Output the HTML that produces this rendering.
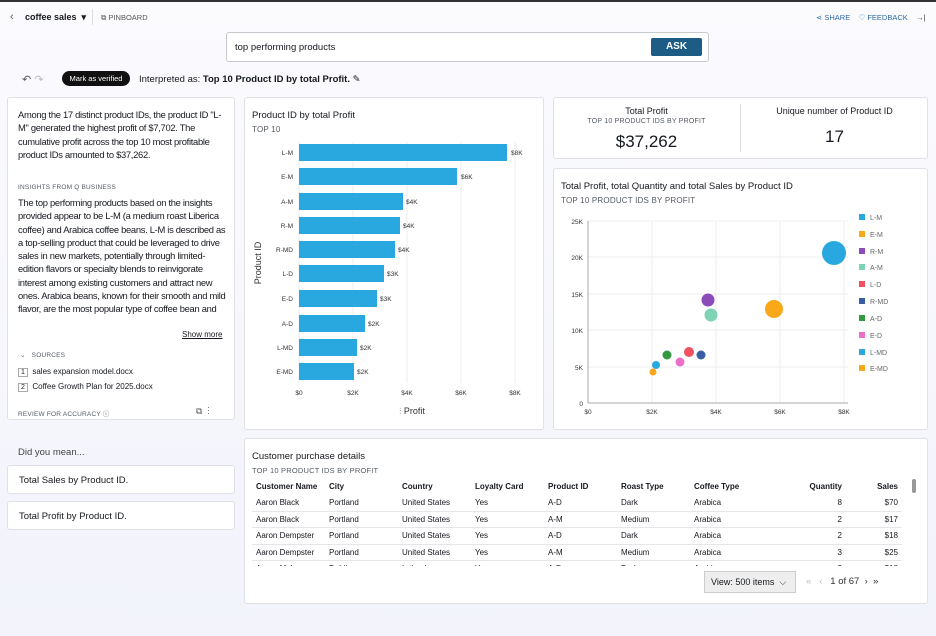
<!DOCTYPE html>
<html><head><meta charset="utf-8"><style>
*{box-sizing:border-box;margin:0;padding:0}
body{width:936px;height:636px;overflow:hidden;font-family:"Liberation Sans",sans-serif;background:linear-gradient(180deg,#fbfbfe,#f2f3fb);position:relative;color:#16191f}
.a{position:absolute}
.p{position:absolute;background:#fff;border:1px solid #dfe1e6;border-radius:3px}
.s{font-size:8px;color:#545b64;letter-spacing:.2px}
table{border-collapse:collapse;font-size:8px;width:650px}
td,th{text-align:left;padding:0 4px;height:16.5px;border-bottom:1px solid #e4e6ea;white-space:nowrap}
th{font-weight:bold;border:none}
.r{text-align:right}
</style></head><body>
<div class="a" style="left:0;top:0;width:936px;height:2px;background:#333"></div>
<div class="a" style="left:10px;top:11px;font-size:11px;color:#555">&#8249;</div>
<div class="a" style="left:25px;top:12px;font-size:9px;font-weight:bold">coffee sales &nbsp;▾</div>
<div class="a" style="left:92px;top:9px;width:1px;height:16px;background:#ddd"></div>
<div class="a" style="left:101px;top:13px;font-size:7.5px;color:#555">⧉ PINBOARD</div>
<div class="a" style="left:816px;top:13px;font-size:7.5px;color:#2c6aa8">⋖ SHARE &nbsp;&nbsp;&nbsp;♡ FEEDBACK &nbsp;&nbsp;&nbsp;<span style="color:#333">→|</span></div>
<div class="a" style="left:226px;top:32px;width:483px;height:30px;background:#fff;border:1px solid #c6c9ce;border-radius:3px"></div>
<div class="a" style="left:235px;top:42px;font-size:9.5px">top performing products</div>
<div class="a" style="left:651px;top:38px;width:51px;height:18px;background:#1d5c85;color:#fff;font-size:10px;font-weight:bold;text-align:center;line-height:18px;border-radius:2px">ASK</div>
<div class="a" style="left:22px;top:73px;font-size:11px;color:#555">↶ <span style="color:#bbb">↷</span></div>
<div class="a" style="left:62px;top:71px;width:68px;height:15px;background:#111;color:#fff;border-radius:8px;font-size:7.5px;text-align:center;line-height:15px">Mark as verified</div>
<div class="a" style="left:139px;top:74px;font-size:9.5px">Interpreted as: <b>Top 10 Product ID by total Profit.</b> ✎</div>

<div class="p" style="left:7px;top:97px;width:228px;height:323px"></div>
<div class="a" style="left:18px;top:108px;width:212px;font-size:9.4px;line-height:13.3px;letter-spacing:-0.3px">Among the 17 distinct product IDs, the product ID "L-M" generated the highest profit of $7,702. The cumulative profit across the top 10 most profitable product IDs amounted to $37,262.</div>
<div class="a s" style="left:18px;top:184px;font-size:6.5px">INSIGHTS FROM Q BUSINESS</div>
<div class="a" style="left:18px;top:196px;width:212px;height:132px;overflow:hidden;font-size:9.4px;line-height:13.3px;letter-spacing:-0.3px">The top performing products based on the insights provided appear to be L-M (a medium roast Liberica coffee) and Arabica coffee beans. L-M is described as a top-selling product that could be leveraged to drive sales in new markets, potentially through limited-edition flavors or specialty blends to reinvigorate interest among existing customers and attract new ones. Arabica beans, known for their smooth and mild flavor, are the most popular type of coffee bean and</div>
<div class="a" style="left:182px;top:330px;font-size:8px;text-decoration:underline">Show more</div>
<div class="a s" style="left:20px;top:351px;font-size:6.5px">⌄ &nbsp;&nbsp;SOURCES</div>
<div class="a" style="left:18px;top:367px;font-size:8px"><span style="border:1px solid #aaa;padding:0 2px;font-size:7px">1</span>&nbsp; sales expansion model.docx</div>
<div class="a" style="left:18px;top:382px;font-size:8px"><span style="border:1px solid #aaa;padding:0 2px;font-size:7px">2</span>&nbsp; Coffee Growth Plan for 2025.docx</div>
<div class="a s" style="left:18px;top:408px;font-size:6.5px">REVIEW FOR ACCURACY ⓘ</div>
<div class="a" style="left:196px;top:406px;font-size:9px;color:#555">⧉ &nbsp;⋮</div>
<div class="a" style="left:18px;top:447px;font-size:9.5px;color:#444">Did you mean...</div>
<div class="p" style="left:7px;top:465px;width:228px;height:29px;font-size:9.5px;padding:9px 11px">Total Sales by Product ID.</div>
<div class="p" style="left:7px;top:501px;width:228px;height:29px;font-size:9.5px;padding:9px 11px">Total Profit by Product ID.</div>

<div class="p" style="left:244px;top:97px;width:300px;height:333px"></div>
<div class="a" style="left:252px;top:110px;font-size:9.5px;color:#16191f">Product ID by total Profit</div>
<div class="a s" style="left:252px;top:125px">TOP 10</div>
<svg class="a" style="left:244px;top:97px" width="300" height="333">
<g stroke="#eceef1"><line x1="55" y1="45" x2="55" y2="286"/><line x1="109" y1="45" x2="109" y2="286"/><line x1="163" y1="45" x2="163" y2="286"/><line x1="217" y1="45" x2="217" y2="286"/><line x1="271" y1="45" x2="271" y2="286"/></g>
<g fill="#29a8e0">
<rect x="55" y="47" width="208" height="17"/><rect x="55" y="71" width="158" height="17"/><rect x="55" y="96" width="104" height="17"/><rect x="55" y="120" width="101" height="17"/><rect x="55" y="144" width="96" height="17"/><rect x="55" y="168" width="85" height="17"/><rect x="55" y="193" width="78" height="17"/><rect x="55" y="218" width="66" height="17"/><rect x="55" y="242" width="58" height="17"/><rect x="55" y="266" width="55" height="17"/></g>
<g font-size="6.5" fill="#333" text-anchor="end"><text x="49" y="58">L-M</text><text x="49" y="82">E-M</text><text x="49" y="107">A-M</text><text x="49" y="131">R-M</text><text x="49" y="155">R-MD</text><text x="49" y="179">L-D</text><text x="49" y="204">E-D</text><text x="49" y="229">A-D</text><text x="49" y="253">L-MD</text><text x="49" y="277">E-MD</text></g>
<g font-size="6.5" fill="#333"><text x="267" y="58">$8K</text><text x="217" y="82">$6K</text><text x="162" y="107">$4K</text><text x="159" y="131">$4K</text><text x="154" y="155">$4K</text><text x="143" y="179">$3K</text><text x="136" y="204">$3K</text><text x="124" y="229">$2K</text><text x="116" y="253">$2K</text><text x="113" y="277">$2K</text></g>
<g font-size="6.5" fill="#333" text-anchor="middle"><text x="55" y="298">$0</text><text x="109" y="298">$2K</text><text x="163" y="298">$4K</text><text x="217" y="298">$6K</text><text x="271" y="298">$8K</text></g>
<text x="168" y="317" font-size="9" fill="#333" text-anchor="middle">⫶ Profit</text>
<text transform="translate(17,166) rotate(-90)" font-size="9" fill="#333" text-anchor="middle">Product ID</text>
</svg>

<div class="p" style="left:553px;top:97px;width:375px;height:62px"></div>
<div class="a" style="left:740px;top:104px;width:1px;height:48px;background:#e0e0e0"></div>
<div class="a" style="left:553px;top:106px;width:187px;text-align:center;font-size:9px">Total Profit</div>
<div class="a s" style="left:553px;top:118px;width:187px;text-align:center;font-size:7px">TOP 10 PRODUCT IDS BY PROFIT</div>
<div class="a" style="left:553px;top:132px;width:187px;text-align:center;font-size:17px">$37,262</div>
<div class="a" style="left:741px;top:106px;width:187px;text-align:center;font-size:9px">Unique number of Product ID</div>
<div class="a" style="left:741px;top:127px;width:187px;text-align:center;font-size:17px">17</div>

<div class="p" style="left:553px;top:168px;width:375px;height:262px"></div>
<div class="a" style="left:561px;top:181px;font-size:9.5px">Total Profit, total Quantity and total Sales by Product ID</div>
<div class="a s" style="left:561px;top:196px">TOP 10 PRODUCT IDS BY PROFIT</div>
<svg class="a" style="left:553px;top:168px" width="375" height="262">
<g stroke="#eceef1"><line x1="35" y1="53" x2="295" y2="53"/><line x1="35" y1="89" x2="295" y2="89"/><line x1="35" y1="126" x2="295" y2="126"/><line x1="35" y1="162" x2="295" y2="162"/><line x1="35" y1="199" x2="295" y2="199"/><line x1="99" y1="53" x2="99" y2="235"/><line x1="163" y1="53" x2="163" y2="235"/><line x1="227" y1="53" x2="227" y2="235"/><line x1="291" y1="53" x2="291" y2="235"/></g>
<line x1="35" y1="53" x2="35" y2="235" stroke="#aaa"/><line x1="35" y1="235" x2="295" y2="235" stroke="#aaa"/>
<g font-size="6.5" fill="#333" text-anchor="end"><text x="30" y="56">25K</text><text x="30" y="92">20K</text><text x="30" y="129">15K</text><text x="30" y="165">10K</text><text x="30" y="202">5K</text><text x="30" y="238">0</text></g>
<g font-size="6.5" fill="#333" text-anchor="middle"><text x="35" y="246">$0</text><text x="99" y="246">$2K</text><text x="163" y="246">$4K</text><text x="227" y="246">$6K</text><text x="291" y="246">$8K</text></g>
<circle cx="281" cy="85" r="12" fill="#29a8e0"/><circle cx="221" cy="141" r="9" fill="#f9a81a"/><circle cx="155" cy="132" r="6.5" fill="#8b4bb8"/><circle cx="158" cy="147" r="6.5" fill="#7fd3b5"/><circle cx="136" cy="184" r="5" fill="#f0505f"/><circle cx="148" cy="187" r="4.5" fill="#3a5ea5"/><circle cx="114" cy="187" r="4.5" fill="#359a3d"/><circle cx="127" cy="194" r="4.5" fill="#ea6fcb"/><circle cx="103" cy="197" r="4" fill="#29a8e0"/><circle cx="100" cy="204" r="3.5" fill="#f9a81a"/>
<g font-size="7" fill="#666">
<rect x="306" y="46" width="6" height="6" fill="#29a8e0"/><text x="317" y="52">L-M</text>
<rect x="306" y="63" width="6" height="6" fill="#f9a81a"/><text x="317" y="69">E-M</text>
<rect x="306" y="80" width="6" height="6" fill="#8b4bb8"/><text x="317" y="86">R-M</text>
<rect x="306" y="96" width="6" height="6" fill="#7fd3b5"/><text x="317" y="102">A-M</text>
<rect x="306" y="113" width="6" height="6" fill="#f0505f"/><text x="317" y="119">L-D</text>
<rect x="306" y="130" width="6" height="6" fill="#3a5ea5"/><text x="317" y="136">R-MD</text>
<rect x="306" y="147" width="6" height="6" fill="#359a3d"/><text x="317" y="153">A-D</text>
<rect x="306" y="164" width="6" height="6" fill="#ea6fcb"/><text x="317" y="170">E-D</text>
<rect x="306" y="181" width="6" height="6" fill="#29a8e0"/><text x="317" y="187">L-MD</text>
<rect x="306" y="197" width="6" height="6" fill="#f9a81a"/><text x="317" y="203">E-MD</text></g>
</svg>

<div class="p" style="left:244px;top:438px;width:684px;height:166px"></div>
<div class="a" style="left:252px;top:451px;font-size:9.5px">Customer purchase details</div>
<div class="a s" style="left:252px;top:466px;font-size:7.5px">TOP 10 PRODUCT IDS BY PROFIT</div>
<div class="a" style="left:252px;top:478px;width:656px;height:88px;overflow:hidden">
<table>
<tr><th style="width:73px">Customer Name</th><th style="width:73px">City</th><th style="width:73px">Country</th><th style="width:73px">Loyalty Card</th><th style="width:73px">Product ID</th><th style="width:73px">Roast Type</th><th style="width:73px">Coffee Type</th><th class="r" style="width:83px">Quantity</th><th class="r">Sales</th></tr>
<tr><td>Aaron Black</td><td>Portland</td><td>United States</td><td>Yes</td><td>A-D</td><td>Dark</td><td>Arabica</td><td class="r">8</td><td class="r">$70</td></tr>
<tr><td>Aaron Black</td><td>Portland</td><td>United States</td><td>Yes</td><td>A-M</td><td>Medium</td><td>Arabica</td><td class="r">2</td><td class="r">$17</td></tr>
<tr><td>Aaron Dempster</td><td>Portland</td><td>United States</td><td>Yes</td><td>A-D</td><td>Dark</td><td>Arabica</td><td class="r">2</td><td class="r">$18</td></tr>
<tr><td>Aaron Dempster</td><td>Portland</td><td>United States</td><td>Yes</td><td>A-M</td><td>Medium</td><td>Arabica</td><td class="r">3</td><td class="r">$25</td></tr>
<tr><td>Aaron Maher</td><td>Dublin</td><td>Ireland</td><td>Yes</td><td>A-D</td><td>Dark</td><td>Arabica</td><td class="r">2</td><td class="r">$18</td></tr>
</table></div>
<div class="a" style="left:912px;top:479px;width:4px;height:14px;background:#999;border-radius:2px"></div>
<div class="a" style="left:704px;top:571px;width:92px;height:22px;background:#eee;border:1px solid #ccc;font-size:9px;padding:5px 6px">View: 500 items &nbsp;⌵</div>
<div class="a" style="left:806px;top:576px;font-size:9.5px;color:#333"><span style="color:#bbb">«&nbsp;&nbsp; ‹</span>&nbsp;&nbsp; 1 of 67 &nbsp;› &nbsp;»</div>
</body></html>
